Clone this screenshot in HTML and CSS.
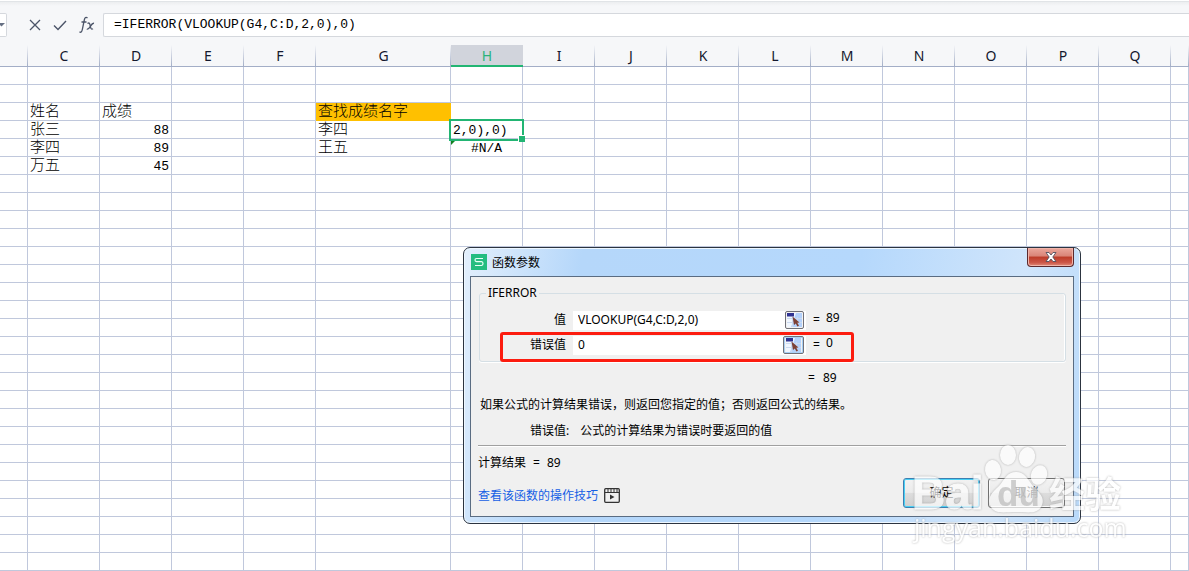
FILE: index.html
```html
<!DOCTYPE html>
<html lang="zh-CN">
<head>
<meta charset="utf-8">
<title>函数参数</title>
<link rel="stylesheet" href="styles.css">
</head>
<body>
<header class="formula-bar">
  <button class="name-box" type="button" aria-label="名称框"><svg width="5" height="4" viewBox="0 0 5 4"><path d="M0 0h5L1.500 3.500L0 2z" fill="#667083"/></svg></button>
  <div class="formula-tools">
    <button type="button" aria-label="取消输入"><svg width="12" height="12" viewBox="0 0 12 12"><path d="M1 1l10 10M11 1L1 11" fill="none" stroke="#4b5468" stroke-width="1.300"/></svg></button>
    <button type="button" aria-label="输入"><svg width="14" height="12" viewBox="0 0 14 12"><path d="M1 6.500l4 4L13 2" fill="none" stroke="#4b5468" stroke-width="1.400"/></svg></button>
    <button type="button" aria-label="插入函数"><svg width="16" height="18" viewBox="0 0 16 18"><path d="M8.500 2C7 .6 5.800 1.500 5.300 4L3.300 13.500C2.900 16 1.800 16.800.5 15.800M2.500 6h5M8.500 7.500c2-1.300 2.300.2 2.700 2.200s.8 4.300 2.800 3M15 7.300c-1.500-.4-2.400 1-3.500 2.900S9.400 13.800 7.800 13" fill="none" stroke="#4b5468" stroke-width="1.300"/></svg></button>
  </div>
  <input class="formula-input" type="text" aria-label="编辑栏" value="=IFERROR(VLOOKUP(G4,C:D,2,0),0)">
</header>

<main class="sheet">
  <table class="grid">
    <colgroup><col class="col-edge"><col class="col"><col class="col"><col class="col"><col class="col"><col class="col-wide"><col class="col"><col class="col"><col class="col"><col class="col"><col class="col"><col class="col"><col class="col"><col class="col"><col class="col"><col class="col"><col></colgroup>
    <thead>
      <tr><th></th><th>C</th><th>D</th><th>E</th><th>F</th><th>G</th><th class="current">H</th><th>I</th><th>J</th><th>K</th><th>L</th><th>M</th><th>N</th><th>O</th><th>P</th><th>Q</th><th></th></tr>
    </thead>
    <tbody id="rows"></tbody>
  </table>
</main>

<section class="dialog" role="dialog" aria-labelledby="dialog-title">
  <div class="titlebar">
    <svg width="16" height="16" viewBox="0 0 16 16"><rect width="16" height="16" fill="#24bd80"/><path d="M12 4.500H5.500Q4 4.500 4 6t1.500 1.700h5Q12 7.800 12 9.500t-1.500 2H4" fill="none" stroke="#e8fff5" stroke-width="1.200"/></svg>
    <h1 id="dialog-title">函数参数</h1>
    <button class="close" type="button" aria-label="关闭"><svg width="12" height="10" viewBox="0 0 12 10"><path d="M1 .5h3L6 3 8 .5h3L7.800 5 11 9.500H8L6 7 4 9.500H1L4.200 5z" fill="#fff" stroke="#52505f" stroke-width=".9"/></svg></button>
  </div>
  <form class="dialog-body">
    <fieldset>
      <legend>IFERROR</legend>
      <div class="arg">
        <label for="value">值</label>
        <div class="field"><input id="value" type="text" value="VLOOKUP(G4,C:D,2,0)"><button class="picker" type="button" aria-label="选择区域"><svg width="15" height="14" viewBox="0 0 15 14"><rect width="15" height="14" fill="#f0f6ff"/><path d="M9 0h6v14H4z" fill="#b4d1fb"/><path d="M0 5.500h15M0 9.500h15M5.500 4v10M10.500 4v10" stroke="#cbdaf0"/><rect width="7" height="3.500" fill="#303391"/><path d="M5.500 3.500l7 6-2.200.2 1.700 3-1.600.8-1.600-3-1.800 1.500z" fill="#7d4136"/></svg></button></div>
        <span class="equals">=</span><output>89</output>
      </div>
      <div class="arg">
        <label for="fallback">错误值</label>
        <div class="field"><input id="fallback" type="text" value="0"><button class="picker picker-active" type="button" aria-label="选择区域"><svg width="15" height="14" viewBox="0 0 15 14"><rect width="15" height="14" fill="#f0f6ff"/><path d="M9 0h6v14H4z" fill="#b4d1fb"/><path d="M0 5.500h15M0 9.500h15M5.500 4v10M10.500 4v10" stroke="#cbdaf0"/><rect width="7" height="3.500" fill="#303391"/><path d="M5.500 3.500l7 6-2.200.2 1.700 3-1.600.8-1.600-3-1.800 1.500z" fill="#7d4136"/></svg></button></div>
        <span class="equals">=</span><output>0</output>
      </div>
    </fieldset>
    <p class="preview"><span class="equals">=</span>89</p>
    <p class="summary">如果公式的计算结果错误，则返回您指定的值；否则返回公式的结果。</p>
    <p class="arg-help"><span>错误值:</span><span>公式的计算结果为错误时要返回的值</span></p>
    <hr>
    <p class="result"><span>计算结果</span><span>=</span><span>89</span></p>
    <div class="footer">
      <a href="#tips">查看该函数的操作技巧<svg width="16" height="15" viewBox="0 0 16 15"><rect x=".7" y=".7" width="14.600" height="13.600" rx="1" fill="none" stroke="#333" stroke-width="1.300"/><path d="M1 4.500h14M4 1v3M7 1v3M10 1v3M13 1v3" stroke="#333"/><path d="M6 6.500l4.500 2.500L6 11.500z" fill="#333"/></svg></a>
      <div class="actions"><button class="push default" type="submit">确定</button><button class="push" type="button">取消</button></div>
    </div>
  </form>
  <div class="marker"></div>
</section>

<svg class="watermark" width="230" height="112" viewBox="0 0 230 112" role="img" aria-label="Baidu 经验">
  <g class="mark">
    <ellipse cx="93" cy="30" rx="8" ry="10" transform="rotate(-8 93 30)"/>
    <ellipse cx="108" cy="15" rx="8" ry="10"/>
    <ellipse cx="127" cy="17" rx="8" ry="10" transform="rotate(12 127 17)"/>
    <ellipse cx="139" cy="35" rx="8" ry="10" transform="rotate(20 139 35)"/>
    <path d="M116 32c9 0 12 8 17 14 6 7 12 11 9 19-4 10-14 7-26 7s-22 3-26-7c-3-8 3-13 9-19 6-7 8-14 17-14z"/>
    <text class="mark-latin" x="12" y="69">Bai</text>
    <text class="mark-cjk" x="149" y="68">经验</text>
    <text class="mark-url" x="14" y="97">jingyan.baidu.com</text>
  </g>
  <text class="mark-du" x="97" y="66">du</text>
</svg>
<script src="sheet.js"></script>
</body>
</html>
```
FILE: styles.css
```css
* { box-sizing: border-box; }
body {
  margin: 0;
  min-height: 100vh;
  overflow: hidden;
  background: #fff;
  color: #000;
  font-family: "Noto Sans", "Noto Sans CJK SC", sans-serif;
  font-size: 12px;
}
button { padding: 0; border: 0; background: none; font: inherit; }
svg { display: block; flex: none; }
h1, p { margin: 0; }

.formula-bar {
  display: flex;
  align-items: flex-start;
  height: 45px;
  padding-top: 13px;
  background: linear-gradient(#fff 0 1px, #e1e4e7 1px 2px, #eceef0 2px, #f6f7f9 6px);
}
.name-box {
  display: flex;
  align-items: center;
  width: 7px;
  height: 24px;
  border: 1px solid #d5d8dd;
  border-left: 0;
  border-radius: 0 2px 2px 0;
  background: #fff;
}
.formula-tools {
  display: flex;
  align-items: center;
  justify-content: space-between;
  width: 66px;
  height: 24px;
  margin: 0 8px 0 22px;
}
.formula-input {
  flex: 1;
  min-width: 0;
  height: 24px;
  padding: 0 10px 2px;
  border: 1px solid #d5d8dd;
  border-right: 0;
  border-radius: 2px 0 0 2px;
  background: #fff;
  color: #000;
  font-family: "Liberation Mono", monospace;
  font-size: 13px;
}

.sheet { height: calc(100vh - 45px); overflow: hidden; }
.grid { width: 100%; table-layout: fixed; border-collapse: separate; border-spacing: 0; }
.col-edge { width: 28px; }
.col { width: 72px; }
.col-wide { width: 135px; }
.grid th {
  height: 22px;
  padding: 0;
  border-bottom: 1px solid #a3aec7;
  background: linear-gradient(#f6f7f9, #a3aec7) right / 1px 100% no-repeat #f6f7f9;
  color: #14182e;
  font-size: 14px;
  font-weight: 400;
  line-height: 20px;
}
.grid th.current {
  border-bottom: 0;
  background: linear-gradient(#22b573, #22b573) bottom / 100% 2px no-repeat #d1d4dc;
  color: #2bb37b;
}
.grid td {
  height: 18px;
  padding: 0 2px;
  border-right: 1px solid #c0c8dc;
  border-bottom: 1px solid #c0c8dc;
  font-family: "Liberation Mono", "Noto Sans CJK SC", monospace;
  font-size: 13px;
  line-height: 14px;
  white-space: nowrap;
}
.grid td.text, .grid td.number, .grid td.error, .grid td.editing { padding-top: 3px; }
.grid td.text { font-size: 15px; font-weight: 300; }
.grid td.number { text-align: right; }
.grid td.heading { border-color: #ffc000; background: #ffc000; }
.grid td.error { position: relative; text-align: center; }
.grid td.error::before {
  content: "";
  position: absolute;
  top: 2px;
  left: 0;
  border-top: 4px solid #108020;
  border-right: 4px solid transparent;
}
.grid td.editing { position: relative; z-index: 1; }
.grid td.editing::before {
  content: "";
  position: absolute;
  inset: -2px -2px -3px;
  border: 2px solid #22b573;
}
.grid td.editing::after {
  content: "";
  position: absolute;
  right: -3px;
  bottom: -4px;
  width: 6px;
  height: 6px;
  border: solid #fff;
  border-width: 1px 0 0 1px;
  background: #22b573;
}

.dialog {
  position: absolute;
  top: 247px;
  left: 463px;
  z-index: 2;
  width: 618px;
  padding: 0 6px 6px;
  border: 1px solid #2c3440;
  border-radius: 7px;
  background: linear-gradient(100deg, #e3effc 0, #b5d7fa 18%, #b5d8fc 60%, #d0e5fb 85%, #b8d9fa 100%);
  box-shadow: inset 0 0 0 1px #eef7ff;
}
.titlebar { display: flex; align-items: center; height: 28px; padding-left: 1px; }
.titlebar h1 { margin-left: 5px; font-size: 12px; font-weight: 400; }
.close {
  display: grid;
  place-items: center;
  align-self: flex-start;
  width: 47px;
  height: 19px;
  margin-left: auto;
  border: 1px solid #5b2a2e;
  border-top: 0;
  border-radius: 0 0 4px 4px;
  background: linear-gradient(#eba79c, #d98477 45%, #bd3b28 50%, #cb5647 80%, #e18b79);
  box-shadow: inset 0 0 0 1px #f1b5aa;
}
.dialog-body {
  padding: 7px;
  border: 1px solid #5a6c82;
  background: #f0f0f0;
  line-height: 18px;
}
fieldset {
  min-width: 0;
  height: 78px;
  margin: 0 0 0 1px;
  padding: 7px 0 0;
  border: 1px solid #d5dfe5;
  border-radius: 3px;
  box-shadow: inset -1px 0 #fff, 0 1px #fff;
}
legend { margin-left: 6px; padding: 0 2px; line-height: 18px; }
.arg {
  display: grid;
  grid-template-columns: 86px 233px 6px 1fr;
  align-items: center;
  column-gap: 7px;
  height: 20px;
  margin-bottom: 5px;
}
.arg label { text-align: right; }
.arg output { padding: 0 0 4px; }
.field { display: flex; align-items: center; height: 19px; padding-right: 2px; background: #fff; }
.field input {
  flex: 1;
  min-width: 0;
  padding: 0 5px;
  border: 0;
  background: none;
  font: inherit;
}
.picker {
  display: grid;
  place-items: center;
  width: 19px;
  height: 18px;
  border: 1px solid #707078;
  border-radius: 2px;
  background: #f2f2f2;
}
.picker-active { width: 21px; box-shadow: inset 0 0 0 1px #a9d0f5; }
.preview { display: flex; gap: 8px; padding: 7px 0 0 330px; }
.summary { padding: 9px 0 0 2px; }
.arg-help { display: flex; gap: 11px; padding: 8px 0 0 52px; }
hr { height: 2px; margin: 5px 0 7px; border: 0; border-top: 1px solid #a0a0a0; background: #fff; }
.result { display: flex; gap: 7px; }
.footer { display: flex; align-items: center; justify-content: space-between; margin-top: 6px; }
.footer a { display: flex; align-items: center; gap: 6px; padding-top: 4px; color: #165fe5; text-decoration: none; }
.actions { display: flex; gap: 8px; padding: 0 1px 1px 0; }
.push {
  width: 77px;
  height: 30px;
  border: 1px solid #707070;
  border-radius: 3px;
  background: linear-gradient(#f2f2f2, #ebebeb 48%, #dddddd 50%, #cfcfcf);
  box-shadow: inset 0 0 0 1px #fafafa;
}
.push.default { border-color: #3c7fb1; box-shadow: inset 0 0 0 1px #48d0f5; }
.marker {
  position: absolute;
  top: 84px;
  left: 36px;
  width: 354px;
  height: 30px;
  border: 3px solid #fc1c0f;
  border-radius: 3px;
  pointer-events: none;
}

.watermark { position: absolute; top: 440px; left: 900px; z-index: 3; pointer-events: none; }
.mark {
  fill: #fff;
  opacity: .7;
  filter: drop-shadow(0 0 1px #999);
  font-family: "Liberation Sans", "Noto Sans CJK SC", sans-serif;
}
.mark-latin { stroke: #fff; font-size: 46px; font-weight: 700; }
.mark-du { fill: #bbb; font-family: "Liberation Sans", sans-serif; font-size: 35px; font-weight: 700; opacity: .7; }
.mark-cjk { font-size: 36px; font-weight: 700; }
.mark-url { font-family: "Open Sans", sans-serif; font-size: 25px; }
```
FILE: sheet.js
```js
const columns = "BCDEFGHIJKLMNOPQR".split("");
const cells = {
  C3: ["姓名", "text"], D3: ["成绩", "text"], G3: ["查找成绩名字", "text heading"],
  C4: ["张三", "text"], D4: ["88", "number"], G4: ["李四", "text"], H4: ["2,0),0)", "editing"],
  C5: ["李四", "text"], D5: ["89", "number"], G5: ["王五", "text"], H5: ["#N/A", "error"],
  C6: ["万五", "text"], D6: ["45", "number"]
};
const body = document.getElementById("rows");
for (let row = 1; row <= 28; row++) {
  const tr = body.insertRow();
  for (const column of columns) {
    const td = tr.insertCell();
    const cell = cells[column + row];
    if (cell) {
      td.textContent = cell[0];
      td.className = cell[1];
    }
  }
}
```
